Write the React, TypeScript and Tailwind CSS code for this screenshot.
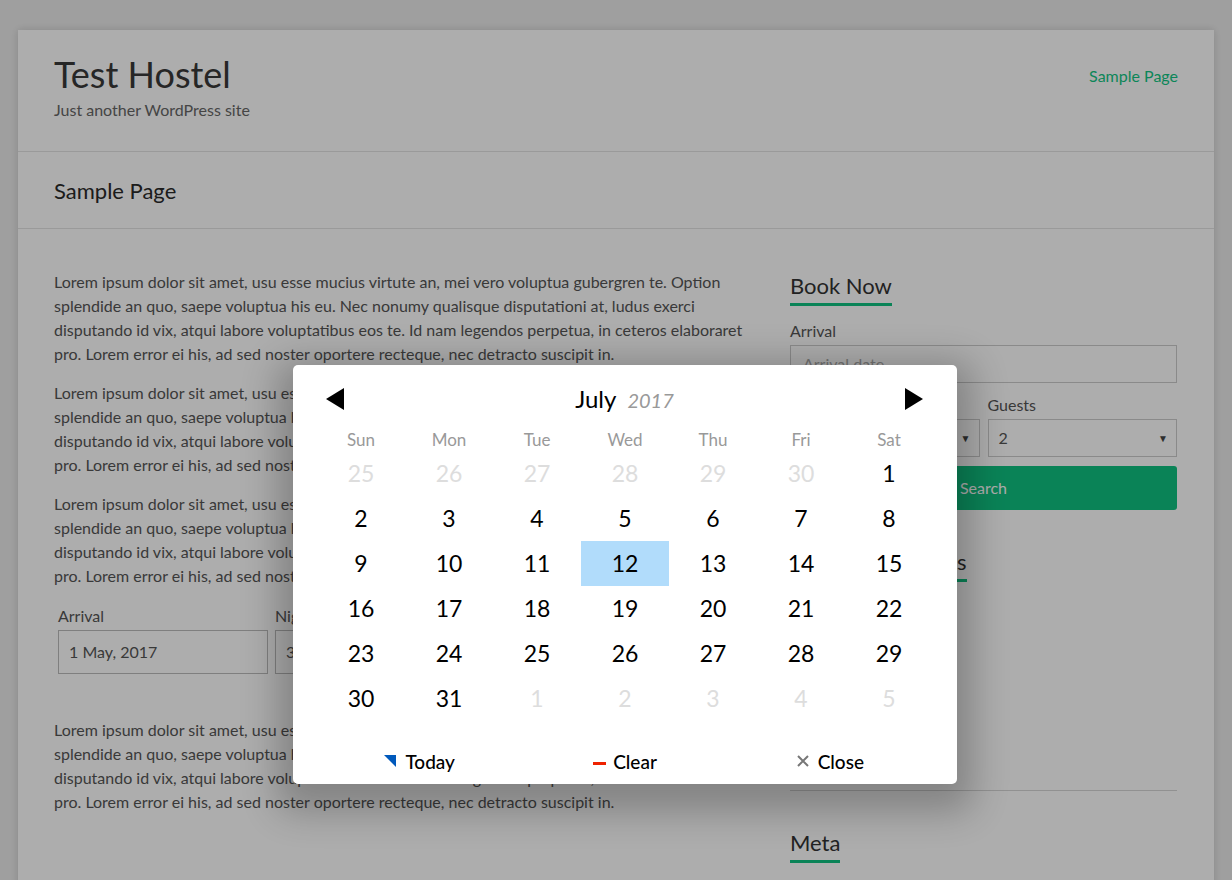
import React from 'react';

const lorem = "Lorem ipsum dolor sit amet, usu esse mucius virtute an, mei vero voluptua gubergren te. Option splendide an quo, saepe voluptua his eu. Nec nonumy qualisque disputationi at, ludus exerci disputando id vix, atqui labore voluptatibus eos te. Id nam legendos perpetua, in ceteros elaboraret pro. Lorem error ei his, ad sed noster oportere recteque, nec detracto suscipit in.";

const weekdays = ["Sun", "Mon", "Tue", "Wed", "Thu", "Fri", "Sat"];

// July 2017, starts on a Saturday
const buildDays = () => {
    const days: { day: number; inMonth: boolean }[] = [];
    for (let d = 25; d <= 30; d++) days.push({ day: d, inMonth: false });
    for (let d = 1; d <= 31; d++) days.push({ day: d, inMonth: true });
    for (let d = 1; d <= 5; d++) days.push({ day: d, inMonth: false });
    return days;
};

const WidgetTitle = ({ children }: { children: React.ReactNode }) => (
    <div>
        <h2 className="inline-block text-[22px] leading-[28px] pt-[2px] pb-[3px] border-b-[3px] border-[#10c280] text-[#333]">
            {children}
        </h2>
    </div>
);

const SelectBox = ({ value }: { value: string }) => (
    <div className="h-[38px] border border-[#ccc] flex items-center justify-between pl-[10px] pr-[8px] text-[16px] text-[#555]">
        <span>{value}</span>
        <span className="text-[10px] text-[#444]">▼</span>
    </div>
);

const DatePicker = () => {
    const days = buildDays();
    const rows = [0, 1, 2, 3, 4, 5].map(r => days.slice(r * 7, r * 7 + 7));
    return (
        <div className="absolute left-[293px] top-[365px] w-[664px] h-[419px] bg-white rounded-[5px] px-[24px] shadow-[0_12px_36px_16px_rgba(0,0,0,0.24)]">
            <div className="h-[62px] pt-[6px] flex items-center justify-between">
                <svg width="18" height="22" viewBox="0 0 18 22" className="ml-[9px]">
                    <polygon points="18,0 18,22 0,11" fill="#000" />
                </svg>
                <div className="flex items-baseline gap-[11px]">
                    <span className="text-[24px] text-[#000]">July</span>
                    <span className="text-[20px] italic text-[#999]">2017</span>
                </div>
                <svg width="18" height="22" viewBox="0 0 18 22" className="mr-[10px]">
                    <polygon points="0,0 0,22 18,11" fill="#000" />
                </svg>
            </div>
            <div className="grid grid-cols-7 h-[24px] items-center">
                {weekdays.map(w => (
                    <div key={w} className="text-center text-[17px] text-[#999]">{w}</div>
                ))}
            </div>
            {rows.map((row, i) => (
                <div key={i} className="grid grid-cols-7">
                    {row.map((d, j) => {
                        const selected = d.inMonth && d.day === 12;
                        return (
                            <div
                                key={j}
                                className={
                                    "h-[45px] flex items-center justify-center text-[23px] " +
                                    (d.inMonth ? "text-[#000] " : "text-[#ddd] ") +
                                    (selected ? "bg-[#b1dcfb]" : "")
                                }
                            >
                                {d.day}
                            </div>
                        );
                    })}
                </div>
            ))}
            <div className="grid grid-cols-3 pt-[20px] h-[63px] items-start">
                <div className="flex items-center justify-center gap-[9px] h-[43px] text-[19px] font-medium text-[#000]">
                    <span className="w-0 h-0 border-t-[12px] border-t-[#0059bc] border-l-[12px] border-l-transparent mt-[-4px]" />
                    <span>Today</span>
                </div>
                <div className="flex items-center justify-center gap-[7px] h-[43px] text-[19px] font-medium text-[#000]">
                    <span className="w-[13px] h-[3px] bg-[#e20] mt-[1px]" />
                    <span>Clear</span>
                </div>
                <div className="flex items-center justify-center gap-[9px] h-[43px] text-[19px] font-medium text-[#000]">
                    <svg width="12" height="12" viewBox="0 0 12 12" className="mt-[-3px]">
                        <path d="M1 1 L11 11 M11 1 L1 11" stroke="#777" strokeWidth="2" />
                    </svg>
                    <span>Close</span>
                </div>
            </div>
        </div>
    );
};

export default function App() {
    return (
        <div className="relative h-[880px] overflow-hidden bg-[#ebebeb] pt-[30px] px-[18px] font-['Lato',sans-serif]">
            <div className="bg-white h-[900px] shadow-[0_0_8px_rgba(0,0,0,0.15)]">
                <header className="h-[122px] px-[36px] pt-[22px] flex justify-between border-b border-[#e3e3e3]">
                    <div>
                        <h1 className="text-[36px] leading-[44px] text-[#383838]">Test Hostel</h1>
                        <p className="mt-[2px] text-[16px] leading-[24px] text-[#666]">Just another WordPress site</p>
                    </div>
                    <nav className="pt-[12px] text-[16px] leading-[24px] text-[#12c683]">Sample Page</nav>
                </header>
                <div className="h-[77px] px-[36px] flex items-center border-b border-[#e3e3e3]">
                    <h2 className="text-[22px] text-[#2a2a2a]">Sample Page</h2>
                </div>
                <div className="pl-[36px] pr-[37px] pt-[41px] flex justify-between">
                    <main className="w-[690px] text-[16px] leading-[24px] text-[#555]">
                        <p className="mb-[15px]">{lorem}</p>
                        <p className="mb-[15px]">{lorem}</p>
                        <p className="mb-[16px]">{lorem}</p>
                        <div className="grid grid-cols-[210px_210px_210px] gap-[7px] px-[4px] mb-[44px]">
                            <div>
                                <label className="block leading-[24px] mb-[2px]">Arrival</label>
                                <div className="h-[44px] border border-[#bbb] flex items-center px-[10px]">1 May, 2017</div>
                            </div>
                            <div>
                                <label className="block leading-[24px] mb-[2px]">Nights</label>
                                <div className="h-[44px] border border-[#bbb] flex items-center px-[10px]">3</div>
                            </div>
                            <div>
                                <label className="block leading-[24px] mb-[2px]">Guests</label>
                                <div className="h-[44px] border border-[#bbb] flex items-center px-[10px]">2</div>
                            </div>
                        </div>
                        <p className="mb-[15px]">{lorem}</p>
                    </main>
                    <aside className="w-[387px] text-[16px] leading-[24px] text-[#555]">
                        <WidgetTitle>Book Now</WidgetTitle>
                        <label className="block mt-[13px] mb-[2px]">Arrival</label>
                        <div className="h-[38px] border border-[#ccc] flex items-center px-[12px] text-[#aaa]">Arrival date</div>
                        <div className="grid grid-cols-2 gap-[8px] mt-[10px]">
                            <div>
                                <label className="block mb-[2px]">Nights</label>
                                <SelectBox value="3" />
                            </div>
                            <div>
                                <label className="block mb-[2px]">Guests</label>
                                <SelectBox value="2" />
                            </div>
                        </div>
                        <button className="mt-[9px] w-full h-[44px] rounded-[3px] bg-[#10c280] text-white text-[16px]">Search</button>
                        <div className="mt-[36px]">
                            <WidgetTitle>Recent Comments</WidgetTitle>
                        </div>
                        <div className="h-[209px] border-b border-[#d6d6d6]" />
                        <div className="mt-[36px]">
                            <WidgetTitle>Meta</WidgetTitle>
                        </div>
                    </aside>
                </div>
            </div>
            <div className="absolute inset-0 bg-black/[0.32]" />
            <DatePicker />
        </div>
    );
}
